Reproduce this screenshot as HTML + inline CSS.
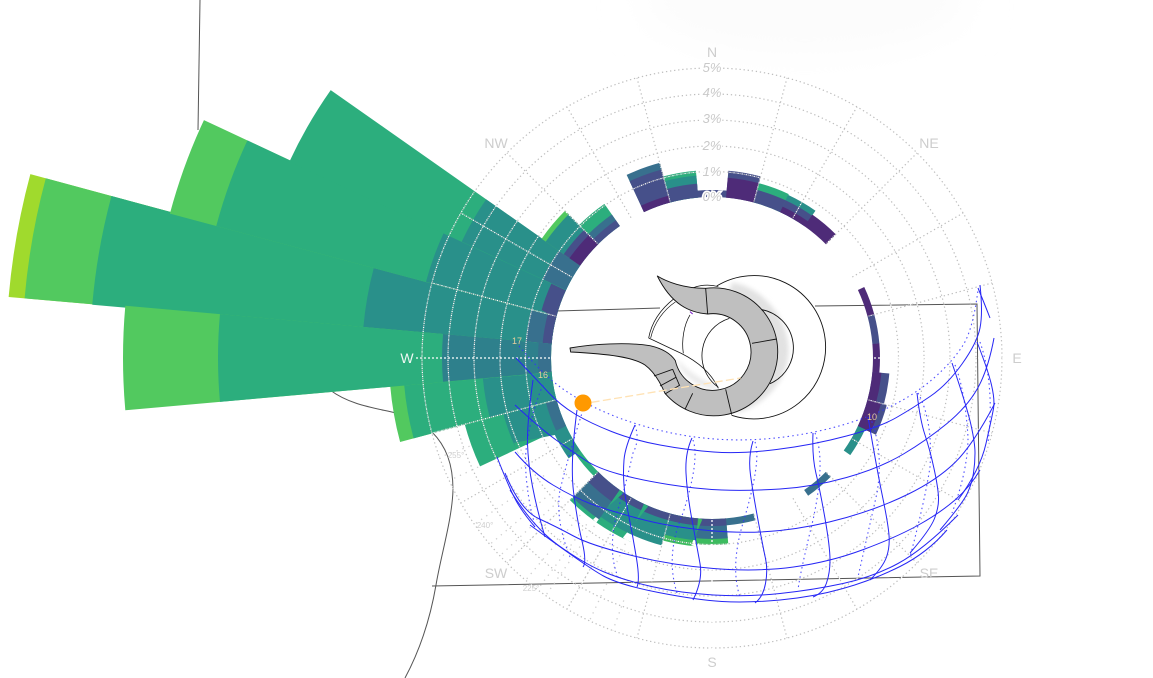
<!DOCTYPE html>
<html><head><meta charset="utf-8">
<style>
html,body{margin:0;padding:0;background:#fff;width:1153px;height:678px;overflow:hidden}
#f{position:relative;width:1153px;height:678px;overflow:hidden;contain:paint}
svg{display:block;font-family:"Liberation Sans",sans-serif}
.w circle{fill:none;stroke-dasharray:10.1 349.9}
.rg circle{fill:none;stroke:#bdbdbd;stroke-width:1.2;stroke-dasharray:1.3 2.8}
.rw circle{fill:none;stroke:#fff;stroke-width:1.2;stroke-dasharray:1.3 2.8;stroke-dashoffset:2}
.sg line{stroke:#bdbdbd;stroke-width:1.2;stroke-dasharray:1.3 2.8}
.sw line{stroke:#fff;stroke-width:1.2;stroke-dasharray:1.3 2.8;stroke-dashoffset:2}
.sx line{stroke:#cfcfcf;stroke-width:1.3;stroke-dasharray:1.3 5}
.sc line{stroke:#fff;stroke-width:1.3;stroke-dasharray:2 2}
.sp{fill:none;stroke:#2626f5;stroke-width:1;stroke-linejoin:round}
.sd{fill:none;stroke:#3030ff;stroke-width:1.1;stroke-dasharray:1.5 3.2;opacity:.85}
.lb{font-size:14px;fill:#cdcdcd;text-anchor:middle}
.pc{font-size:13px;fill:#c9c9c9;text-anchor:middle;font-style:italic;paint-order:stroke;stroke:#fff;stroke-width:3px}
.sm{font-size:8px;fill:#cfcfcf;text-anchor:middle}
.hr{font-size:9px;fill:#e8cf9c;text-anchor:middle}
.b{fill:none;stroke:#111;stroke-width:2.7}
</style></head>
<body>
<div id="f">
<svg width="1153" height="678" viewBox="0 0 1153 678" xmlns="http://www.w3.org/2000/svg">
<defs>
<filter id="bl" x="-30%" y="-30%" width="160%" height="160%"><feGaussianBlur stdDeviation="7"/></filter>
<filter id="bf" x="-30%" y="-30%" width="160%" height="160%"><feGaussianBlur stdDeviation="20"/></filter>
</defs>
<rect width="1153" height="678" fill="#fff"/>
<ellipse cx="805" cy="0" rx="165" ry="55" fill="#fcfcfc" filter="url(#bf)"/>

<!-- site outline -->
<g fill="none" stroke="#555" stroke-width="1">
<path d="M200 0L198 130"/>
<path d="M330 390C350 405 375 408 396 413"/>
<path d="M432 432C446 446 453 464 453 490C452 520 441 555 436 585C430 620 420 650 405 678"/>
<path d="M556 311L660 308M815 306L977 304L980 576L432 586"/>
</g>

<!-- wind rose -->
<g transform="translate(712,358)">
<g class="w">
<g transform="rotate(185)">
<circle r="433.5" stroke-width="545" stroke="#a0da2d" pathLength="360"/>
<circle r="425.5" stroke-width="529" stroke="#52c95f" pathLength="360"/>
<circle r="391.5" stroke-width="461" stroke="#2cae7d" pathLength="360"/>
<circle r="255.5" stroke-width="189" stroke="#29908a" pathLength="360"/>
<circle r="174" stroke-width="26" stroke="#38708e" pathLength="360"/>
<circle r="165.5" stroke-width="9" stroke="#46508a" pathLength="360"/>
</g>
<g transform="rotate(195)">
<circle r="361" stroke-width="400" stroke="#52c95f" pathLength="360"/>
<circle r="337" stroke-width="352" stroke="#2cae7d" pathLength="360"/>
<circle r="228.5" stroke-width="135" stroke="#29908a" pathLength="360"/>
<circle r="169" stroke-width="16" stroke="#46508a" pathLength="360"/>
</g>
<g transform="rotate(205)">
<circle r="313.5" stroke-width="305" stroke="#2cae7d" pathLength="360"/>
<circle r="218.5" stroke-width="115" stroke="#29908a" pathLength="360"/>
<circle r="174" stroke-width="26" stroke="#38708e" pathLength="360"/>
</g>
<g transform="rotate(215)">
<circle r="184.5" stroke-width="47" stroke="#52c95f" pathLength="360"/>
<circle r="182" stroke-width="42" stroke="#29908a" pathLength="360"/>
<circle r="171" stroke-width="20" stroke="#46508a" pathLength="360"/>
<circle r="167.5" stroke-width="13" stroke="#4e2b78" pathLength="360"/>
</g>
<g transform="rotate(225)">
<circle r="174.5" stroke-width="27" stroke="#2cae7d" pathLength="360"/>
<circle r="168" stroke-width="14" stroke="#38708e" pathLength="360"/>
<circle r="164.5" stroke-width="7" stroke="#46508a" pathLength="360"/>
</g>
<g transform="rotate(245)">
<circle r="181.5" stroke-width="41" stroke="#38708e" pathLength="360"/>
<circle r="178" stroke-width="34" stroke="#46508a" pathLength="360"/>
<circle r="164.5" stroke-width="7" stroke="#4e2b78" pathLength="360"/>
</g>
<g transform="rotate(255)">
<circle r="174.5" stroke-width="27" stroke="#2cae7d" pathLength="360"/>
<circle r="172" stroke-width="22" stroke="#29908a" pathLength="360"/>
<circle r="168" stroke-width="14" stroke="#46508a" pathLength="360"/>
</g>
<circle transform="rotate(265)" r="164.5" stroke-width="7" stroke="#46508a" pathLength="360"/>
<g transform="rotate(275)">
<circle r="174.5" stroke-width="27" stroke="#46508a" pathLength="360"/>
<circle r="171" stroke-width="20" stroke="#4e2b78" pathLength="360"/>
</g>
<g transform="rotate(285)">
<circle r="171" stroke-width="20" stroke="#2cae7d" pathLength="360"/>
<circle r="167.5" stroke-width="13" stroke="#46508a" pathLength="360"/>
</g>
<g transform="rotate(295)">
<circle r="170.5" stroke-width="19" stroke="#29908a" pathLength="360"/>
<circle r="167.5" stroke-width="13" stroke="#46508a" pathLength="360"/>
<circle r="164" stroke-width="6" stroke="#4e2b78" pathLength="360"/>
</g>
<circle transform="rotate(305)" r="168" stroke-width="14" stroke="#4e2b78" pathLength="360"/>
<circle transform="rotate(335)" r="164.5" stroke-width="7" stroke="#4e2b78" pathLength="360"/>
<circle transform="rotate(345)" r="164.5" stroke-width="7" stroke="#46508a" pathLength="360"/>
<circle transform="rotate(355)" r="164.5" stroke-width="7" stroke="#4e2b78" pathLength="360"/>
<g transform="rotate(5)">
<circle r="169.5" stroke-width="17" stroke="#46508a" pathLength="360"/>
<circle r="165.5" stroke-width="9" stroke="#4e2b78" pathLength="360"/>
</g>
<g transform="rotate(15)">
<circle r="171" stroke-width="20" stroke="#46508a" pathLength="360"/>
<circle r="168" stroke-width="14" stroke="#4e2b78" pathLength="360"/>
</g>
<circle transform="rotate(25)" r="165" stroke-width="8" stroke="#29908a" pathLength="360"/>
<circle transform="rotate(45)" r="164.5" stroke-width="7" stroke="#38708e" pathLength="360"/>
<circle transform="rotate(75)" r="164.5" stroke-width="7" stroke="#38708e" pathLength="360"/>
<g transform="rotate(85)">
<circle r="174" stroke-width="26" stroke="#3dbb5f" pathLength="360"/>
<circle r="171" stroke-width="20" stroke="#38708e" pathLength="360"/>
<circle r="164.5" stroke-width="7" stroke="#46508a" pathLength="360"/>
</g>
<g transform="rotate(95)">
<circle r="175" stroke-width="28" stroke="#3dbb5f" pathLength="360"/>
<circle r="172" stroke-width="22" stroke="#29908a" pathLength="360"/>
<circle r="164.5" stroke-width="7" stroke="#46508a" pathLength="360"/>
</g>
<g transform="rotate(105)">
<circle r="177.5" stroke-width="33" stroke="#29908a" pathLength="360"/>
<circle r="164.5" stroke-width="7" stroke="#46508a" pathLength="360"/>
</g>
<g transform="rotate(115)">
<circle r="181" stroke-width="40" stroke="#2cae7d" pathLength="360"/>
<circle r="177.5" stroke-width="33" stroke="#29908a" pathLength="360"/>
<circle r="164.5" stroke-width="7" stroke="#46508a" pathLength="360"/>
</g>
<g transform="rotate(125)">
<circle r="181" stroke-width="40" stroke="#2cae7d" pathLength="360"/>
<circle r="179" stroke-width="36" stroke="#38708e" pathLength="360"/>
<circle r="168" stroke-width="14" stroke="#46508a" pathLength="360"/>
</g>
<circle transform="rotate(135)" r="164" stroke-width="6" stroke="#2cae7d" pathLength="360"/>
<circle transform="rotate(145)" r="168" stroke-width="14" stroke="#29908a" pathLength="360"/>
<g transform="rotate(155)">
<circle r="208.5" stroke-width="95" stroke="#2cae7d" pathLength="360"/>
<circle r="188.5" stroke-width="55" stroke="#29908a" pathLength="360"/>
<circle r="166.5" stroke-width="11" stroke="#38708e" pathLength="360"/>
</g>
<g transform="rotate(165)">
<circle r="242" stroke-width="162" stroke="#52c95f" pathLength="360"/>
<circle r="235" stroke-width="148" stroke="#2cae7d" pathLength="360"/>
<circle r="195.5" stroke-width="69" stroke="#29908a" pathLength="360"/>
</g>
<g transform="rotate(175)">
<circle r="375" stroke-width="428" stroke="#52c95f" pathLength="360"/>
<circle r="327.5" stroke-width="333" stroke="#2cae7d" pathLength="360"/>
<circle r="215.5" stroke-width="109" stroke="#2e808c" pathLength="360"/>
<circle r="167.5" stroke-width="13" stroke="#38708e" pathLength="360"/>
</g>
</g>

<!-- grid -->
<g class="rg">
<circle r="186.5"/><circle r="212"/><circle r="238"/><circle r="264"/><circle r="290"/>
</g>
<g class="rw">
<circle r="186.5"/><circle r="212"/><circle r="238"/><circle r="264"/><circle r="290"/>
</g>
<g class="sx">
<line x1="258" x2="290" transform="rotate(110)"/><line x1="205" x2="290" transform="rotate(115)"/><line x1="205" x2="290" transform="rotate(125)"/><line x1="205" x2="290" transform="rotate(130)"/><line x1="205" x2="290" transform="rotate(140)"/><line x1="205" x2="290" transform="rotate(145)"/><line x1="258" x2="290" transform="rotate(155)"/><line x1="258" x2="290" transform="rotate(160)"/><line x1="205" x2="290" transform="rotate(120)" style="stroke-dashoffset:2"/><line x1="205" x2="290" transform="rotate(135)" style="stroke-dashoffset:2"/>
<line x1="205" x2="290" transform="rotate(127)" style="stroke-dashoffset:3"/><line x1="205" x2="290" transform="rotate(137)" style="stroke-dashoffset:1"/>
</g>
<g class="sg">
<line x1="162" x2="290" transform="rotate(15)"/><line x1="162" x2="290" transform="rotate(30)"/><line x1="162" x2="290" transform="rotate(45)"/><line x1="162" x2="290" transform="rotate(60)"/><line x1="162" x2="290" transform="rotate(75)"/>
<line x1="162" x2="290" transform="rotate(105)"/><line x1="162" x2="290" transform="rotate(120)"/><line x1="162" x2="290" transform="rotate(135)"/><line x1="162" x2="290" transform="rotate(150)"/><line x1="162" x2="290" transform="rotate(165)"/>
<line x1="162" x2="290" transform="rotate(195)"/><line x1="162" x2="290" transform="rotate(210)"/><line x1="162" x2="290" transform="rotate(225)"/><line x1="162" x2="290" transform="rotate(240)"/><line x1="162" x2="290" transform="rotate(255)"/>
<line x1="162" x2="290" transform="rotate(285)"/><line x1="162" x2="290" transform="rotate(300)"/><line x1="162" x2="290" transform="rotate(315)"/><line x1="162" x2="290" transform="rotate(330)"/><line x1="162" x2="290" transform="rotate(345)"/>
</g>
<g class="sw">
<line x1="162" x2="290" transform="rotate(15)"/><line x1="162" x2="290" transform="rotate(30)"/><line x1="162" x2="290" transform="rotate(45)"/><line x1="162" x2="290" transform="rotate(60)"/><line x1="162" x2="290" transform="rotate(75)"/>
<line x1="162" x2="290" transform="rotate(105)"/><line x1="162" x2="290" transform="rotate(120)"/><line x1="162" x2="290" transform="rotate(135)"/><line x1="162" x2="290" transform="rotate(150)"/><line x1="162" x2="290" transform="rotate(165)"/>
<line x1="162" x2="290" transform="rotate(195)"/><line x1="162" x2="290" transform="rotate(210)"/><line x1="162" x2="290" transform="rotate(225)"/><line x1="162" x2="290" transform="rotate(240)"/><line x1="162" x2="290" transform="rotate(255)"/>
<line x1="162" x2="290" transform="rotate(285)"/><line x1="162" x2="290" transform="rotate(300)"/><line x1="162" x2="290" transform="rotate(315)"/><line x1="162" x2="290" transform="rotate(330)"/><line x1="162" x2="290" transform="rotate(345)"/>
</g>
<g class="sc">
<line x1="162" x2="296" transform="rotate(0)"/><line x1="162" x2="296" transform="rotate(90)"/><line x1="162" x2="296" transform="rotate(180)"/><line x1="162" x2="296" transform="rotate(270)"/>
</g>
</g>

<!-- labels -->
<text class="lb" x="712" y="57">N</text>
<text class="lb" x="929" y="148">NE</text>
<text class="lb" x="1017" y="363">E</text>
<text class="lb" x="929" y="578">SE</text>
<text class="lb" x="712" y="667">S</text>
<text class="lb" x="496" y="578">SW</text>
<text class="lb" x="407" y="363" style="fill:#eef8f3">W</text>
<text class="lb" x="496" y="148">NW</text>
<text class="pc" x="712" y="72">5%</text>
<text class="pc" x="712" y="97">4%</text>
<text class="pc" x="712" y="123">3%</text>
<text class="pc" x="712" y="150">2%</text>
<text class="pc" x="712" y="176">1%</text>
<text class="pc" x="712" y="201">0%</text>
<text class="sm" x="456" y="458">255°</text>
<text class="sm" x="485" y="528">240°</text>
<text class="sm" x="531" y="591">225°</text>

<!-- sunpath: date arcs -->
<path class="sd" d="M519 346Q543 375 563 389Q583 403 608 413.5Q633 424 662.5 431Q692 438 722.5 439.5Q753 441 784 437Q815 433 842.5 425Q870 417 893.5 405Q917 393 934.5 377.5Q952 362 962.5 346Q973 330 978 290"/>
<path class="sp" d="M516 358Q537 380 548.5 392.5Q560 405 575 414Q590 423 611.5 431.5Q633 440 660 445Q687 450 713.5 452Q740 454 776.5 449.5Q813 445 846.5 436Q880 427 896.5 417.5Q913 408 930 396.5Q947 385 962 364Q977 343 980 328Q983 313 980 285"/>
<path class="sp" d="M515 405Q542 430 557.5 441Q573 452 585 460Q597 468 618.5 474Q640 480 668.5 484.5Q697 489 722 490Q747 491 780 489Q813 487 846.5 477.5Q880 468 903.5 454Q927 440 947 423.5Q967 407 977.5 388.5Q988 370 994 338"/>
<path class="sp" d="M515 452Q533 473 553 485Q573 497 590 503.5Q607 510 638.5 518.5Q670 527 708.5 530.5Q747 534 780 530.5Q813 527 846.5 517.5Q880 508 908.5 494Q937 480 955 462.5Q973 445 995 403"/>
<path class="sp" d="M505 473Q520 510 538.5 518.5Q557 527 573.5 536Q590 545 630 555Q670 565 713.5 568.5Q757 572 793.5 567Q830 562 863.5 549.5Q897 537 918.5 525Q940 513 955 500Q970 487 980 470"/>
<path class="sp" d="M510 490Q533 527 558 545Q583 563 603 571.5Q623 580 651.5 586.5Q680 593 713.5 595Q747 597 780 593.5Q813 590 843 583.5Q873 577 898 563.5Q923 550 958 515"/>
<path class="sp" d="M530 525Q587 567 603.5 576Q620 585 658.5 592.5Q697 600 722 601.5Q747 603 780 600Q813 597 843 588.5Q873 580 900 566.5Q927 553 947 530"/>

<!-- sunpath: hour lines -->
<path class="sp" d="M533 380Q527 423 527.5 443Q528 463 532.5 486.5Q537 510 545 537"/>
<path class="sp" d="M497 457Q510 490 516.5 501.5Q523 513 535 527"/>
<path class="sp" d="M577 410Q570 463 573.5 491.5Q577 520 582 541Q587 562 583 567"/>
<path class="sp" d="M635 425Q625 447 624 460Q623 473 624 485Q625 497 629 517Q633 537 636.5 558.5Q640 580 637 587"/>
<path class="sp" d="M692 438Q685 453 686 473Q687 493 692 520Q697 547 700 563.5Q703 580 693 600"/>
<path class="sp" d="M753 441Q748 457 750.5 475Q753 493 758 520Q763 547 765.5 558.5Q768 570 765.5 583.5Q763 597 755 603"/>
<path class="sp" d="M813 433Q812 457 816 473.5Q820 490 825 518.5Q830 547 830 560Q830 573 826.5 583Q823 593 813 597"/>
<path class="sp" d="M868 417Q877 470 882.5 496.5Q888 523 889 535Q890 547 886.5 557Q883 567 870 580"/>
<path class="sp" d="M917 393Q920 420 925 435Q930 450 934 468.5Q938 487 938.5 497Q939 507 934.5 518.5Q930 530 910 553"/>
<path class="sp" d="M952 363Q967 407 971 425Q975 443 975 453Q975 463 973.5 473Q972 483 967.5 493Q963 503 940 530"/>
<path class="sp" d="M977 342Q988 370 991.5 385Q995 400 993.5 408.5Q992 417 986 443.5Q980 470 958 500"/>
<path class="sp" d="M978 288Q983 300 990 318"/>
<path class="sd" d="M543 385Q532 410 527 443Q523 466 530 505Q532 515 535 525"/>
<path class="sd" d="M583 410Q570 450 560 490Q555 520 570 557"/>
<path class="sd" d="M635 425Q640 440 633 453Q628 475 622 497Q605 545 618 577"/>
<path class="sd" d="M693 440Q700 460 683 513Q665 555 677 593"/>
<path class="sd" d="M755 442Q762 460 743 523Q730 567 740 597"/>
<path class="sd" d="M815 433Q826 460 813 520Q800 573 798 590"/>
<path class="sd" d="M870 417Q884 450 877 493Q867 537 858 577"/>
<path class="sd" d="M918 393Q933 420 930 467Q925 500 910 557"/>
<path class="sd" d="M955 365Q965 390 968 437Q968 470 952 513"/>
<path class="sd" d="M980 342Q995 385 988 443"/>

<!-- building shadow -->
<g transform="translate(550,140) scale(0.33333)">
<path d="M545 428C640 440 716 540 716 630C716 720 640 800 560 818L490 637Z" fill="#e2e2e2" filter="url(#bl)"/>
<path class="b" d="M500 438A215 215 0 1 1 545 826" fill="none"/>
<path class="b" d="M630 508A117 117 0 0 1 660 731"/>
<path d="M490 522A115 115 0 1 1 489 752A115 115 0 1 1 490 522Z" fill="#fff"/>
<path d="M378 655C400 715 450 745 505 748L495 735C450 720 410 690 378 655Z" fill="#e6e6e6" filter="url(#bl)" opacity=".9"/>
<path class="b" d="M538 535A117 117 0 0 0 505 742" style="stroke-width:2.4"/>
<path class="b" d="M296 594C305 545 335 505 372 476" style="stroke-width:2.2"/>
<path class="b" d="M302 594C312 550 340 510 376 486" style="stroke-width:2"/>
<path class="b" d="M296 594L372 630C430 655 480 690 505 745" style="stroke-width:2.2"/>
<path class="b" d="M420 525C402 555 394 600 400 640" style="stroke-width:2.2"/>
<path class="b" d="M430 443C455 434 480 433 505 440" style="stroke-width:2"/>
<!-- crescent with horns -->
<path d="M322 408C350 425 400 445 467 445A192 192 0 1 1 345 760C330 725 312 695 285 675C250 652 180 642 62 636L60 624C130 612 230 606 300 617C335 625 362 640 376 662A115 115 0 1 0 473 522C420 518 365 495 322 408Z" fill="#bfbfbf" stroke="#111" stroke-width="2.7" stroke-linejoin="round"/>
<path class="b" d="M467 445L473 522M606 610L680 597M527 748L545 824M428 760L405 808M312 708L368 688M330 738L378 712M345 762L390 735M368 688L388 735"/>
<path d="M420 515L428 522" stroke="#7a18c8" stroke-width="3"/>
<!-- sun ray -->
<path d="M125 787L350 750L572 714" fill="none" stroke="#ffe2b4" stroke-width="4" stroke-dasharray="24 10"/>
</g>

<circle cx="583" cy="403" r="8.5" fill="#ff9900"/>
<text class="hr" x="517" y="344">17</text>
<text class="hr" x="543" y="378">16</text>
<text class="hr" x="872" y="420">10</text>
</svg>
</div>
</body></html>
